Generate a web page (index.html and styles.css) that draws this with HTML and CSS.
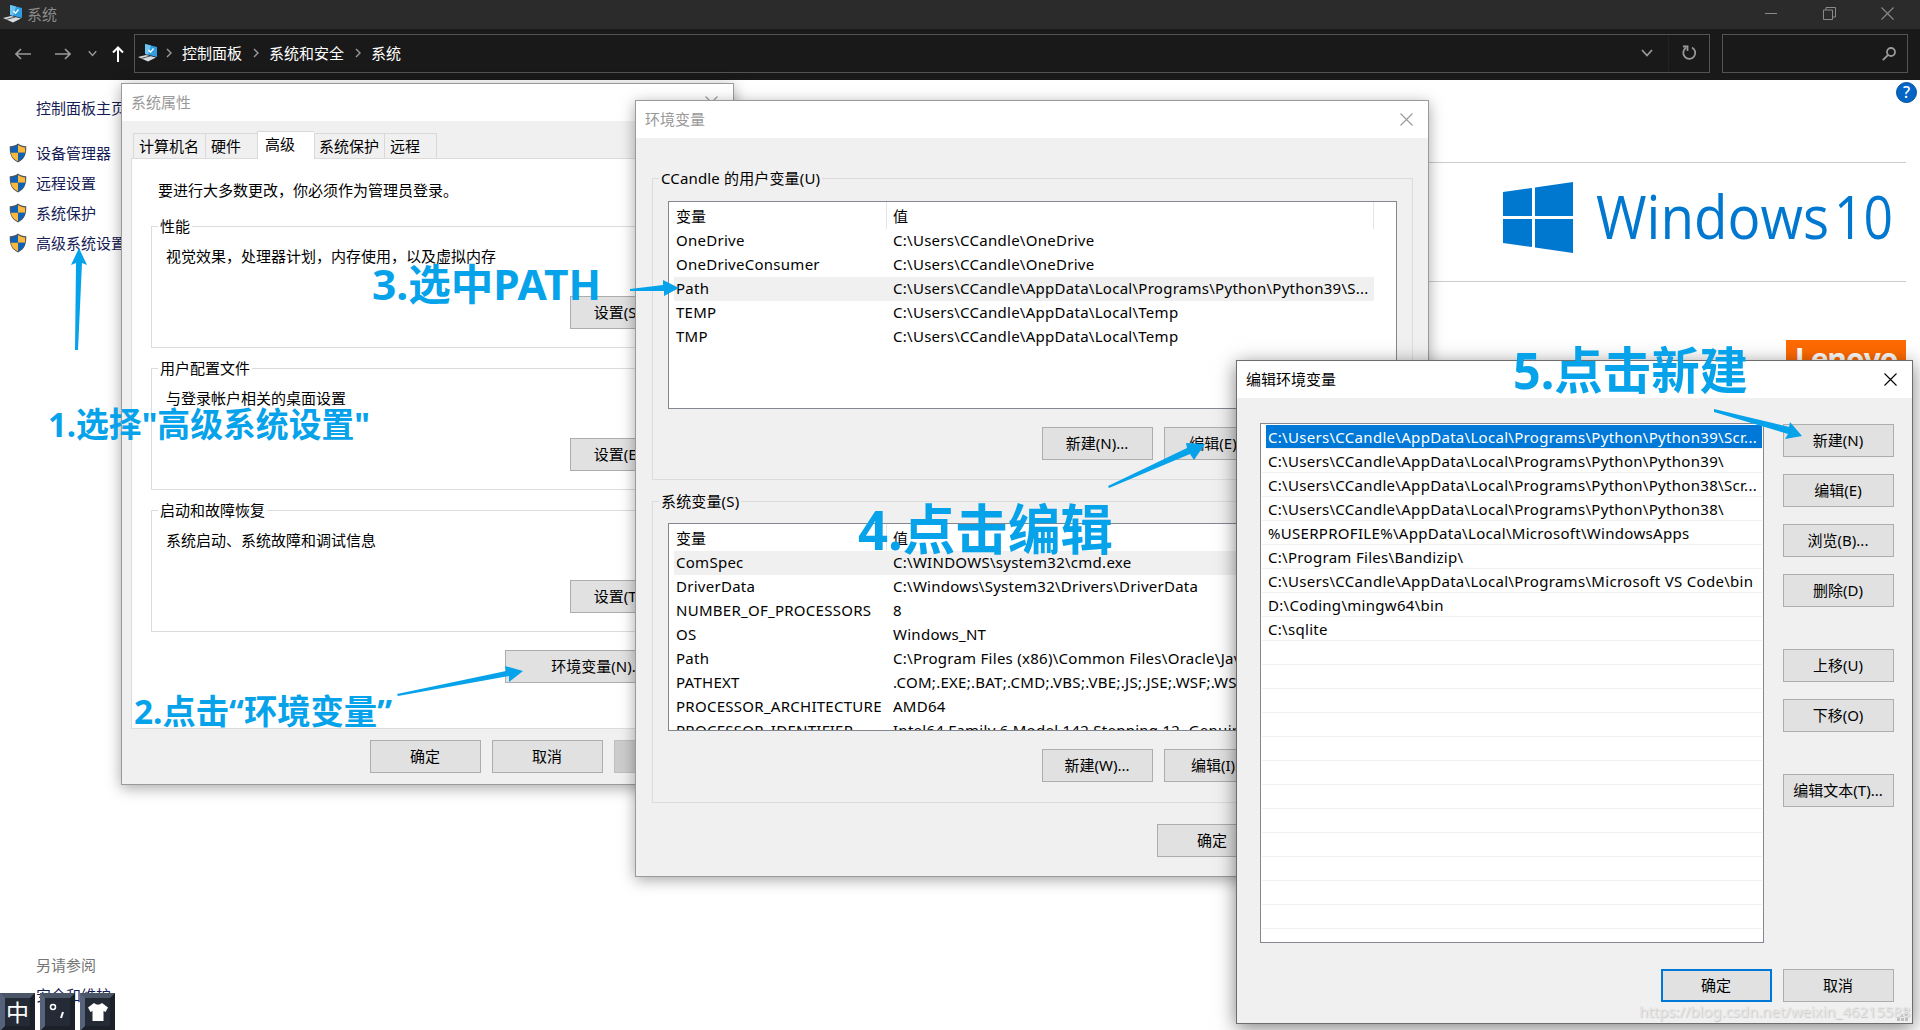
FILE: index.html
```html
<!DOCTYPE html>
<html lang="zh-CN">
<head>
  <meta charset="UTF-8" />
  <meta name="viewport" content="width=device-width, initial-scale=1" />
  <title>系统</title>
  <link rel="stylesheet" href="styles.css">
</head>
<body>

  <!-- Shared icons -->
  <svg class="defs" width="0" height="0">
    <symbol id="pc" viewBox="0 0 20 18">
      <path d="M7 0 L19 3 L19 13 L7 10 Z" fill="#2f9de0"/>
      <path d="M7 0 L13 1.600 L10 10.700 L7 10 Z" fill="#6cc4f2"/>
      <path d="M10.500 6 L12.500 8.300 L15.500 4.500" fill="none" stroke="#fff" stroke-width="1.300"/>
      <path d="M0 13 L8 11 L18 13.500 L10 17.500 Z" fill="#d9dde0"/>
      <path d="M3.500 14.300 L12.500 12" stroke="#333" stroke-width=".8"/>
    </symbol>
    <symbol id="shield" viewBox="0 0 19 21">
      <path d="M9.500 .5 C7 2.500 4 3.200 .8 3.500 C.5 11 2 17 9.500 20.500 C17 17 18.500 11 18.200 3.500 C15 3.200 12 2.500 9.500 .5Z" fill="#4d5560"/>
      <path d="M9.500 2 C7 3.600 4.500 4.400 2 4.600 L2 10.200 L9.500 10.200Z" fill="#0c62b8"/>
      <path d="M9.500 2 C12 3.600 14.500 4.400 17 4.600 L17 10.200 L9.500 10.200Z" fill="#fcb83a"/>
      <path d="M2 10.200 C2.600 14.500 5 17.300 9.500 19.200 L9.500 10.200Z" fill="#fcb83a"/>
      <path d="M17 10.200 C16.400 14.500 14 17.300 9.500 19.200 L9.500 10.200Z" fill="#0c62b8"/>
    </symbol>
    <symbol id="close" viewBox="0 0 13 13">
      <path d="M.5 .5 L12.500 12.500 M12.500 .5 L.5 12.500" fill="none" stroke="currentColor" stroke-width="1.100"/>
    </symbol>
    <symbol id="chev" viewBox="0 0 6 10">
      <path d="M1 1 L5 5 L1 9" fill="none" stroke="currentColor" stroke-width="1.400"/>
    </symbol>
    <symbol id="down" viewBox="0 0 12 8">
      <path d="M1 1 L6 6.500 L11 1" fill="none" stroke="currentColor" stroke-width="1.800"/>
    </symbol>
  </svg>

  <!-- System window -->
  <header class="titlebar">
    <svg class="pc"><use href="#pc"/></svg>
    <span>系统</span>
    <div class="controls">
      <svg width="13" height="13"><path d="M0 6.500 H12" stroke="currentColor"/></svg>
      <svg width="13" height="13"><path d="M.5 3 H9.500 V12.500 H.5Z M3 3 V.5 H12.500 V10 H9.500" fill="none" stroke="currentColor"/></svg>
      <svg width="13" height="13"><use href="#close"/></svg>
    </div>
  </header>
  <nav class="navbar">
    <div class="arrows">
      <svg width="16" height="12" class="left"><path d="M16 6 H1 M6 1 L1 6 L6 11" fill="none" stroke="currentColor" stroke-width="1.700"/></svg>
      <svg width="16" height="12" class="right"><path d="M0 6 H15 M10 1 L15 6 L10 11" fill="none" stroke="currentColor" stroke-width="1.700"/></svg>
      <svg width="9" height="7" class="recent"><use href="#down"/></svg>
      <svg width="12" height="16" class="up"><path d="M6 16 V1.500 M1 6.500 L6 1.500 L11 6.500" fill="none" stroke="currentColor" stroke-width="2"/></svg>
    </div>
    <div class="address">
      <svg class="pc"><use href="#pc"/></svg>
      <svg class="sep"><use href="#chev"/></svg><span>控制面板</span>
      <svg class="sep"><use href="#chev"/></svg><span>系统和安全</span>
      <svg class="sep"><use href="#chev"/></svg><span>系统</span>
      <svg class="drop" width="12" height="8"><use href="#down"/></svg>
      <div class="refresh">
        <svg width="15" height="16"><path d="M10 2.500 A6 6 0 1 1 4 2.800" fill="none" stroke="currentColor" stroke-width="1.800"/><path d="M1 1.500 H5.500 V6" fill="none" stroke="currentColor" stroke-width="1.800"/></svg>
      </div>
    </div>
    <div class="search">
      <svg width="14" height="14"><circle cx="9" cy="5" r="4" fill="none" stroke="currentColor" stroke-width="1.800"/><path d="M6 8 L.8 13.200" stroke="currentColor" stroke-width="1.800"/></svg>
    </div>
  </nav>

  <main class="page">
    <aside class="sidebar">
      <a class="home">控制面板主页</a>
      <a><svg><use href="#shield"/></svg>设备管理器</a>
      <a><svg><use href="#shield"/></svg>远程设置</a>
      <a><svg><use href="#shield"/></svg>系统保护</a>
      <a><svg><use href="#shield"/></svg>高级系统设置</a>
      <div class="see-also">
        <p>另请参阅</p>
        <a>安全和维护</a>
      </div>
    </aside>
    <section class="brand">
      <div class="help">?</div>
      <div class="winlogo">
        <svg width="400" height="90" viewBox="0 0 400 90">
          <path d="M0 11 L29 7 V35 H0Z M32 6.500 L70 1 V35 H32Z M0 38 H29 V66 L0 62Z M32 38 H70 V72 L32 66.500Z" fill="#0078cf"/>
          <text x="93" y="58" textLength="233" lengthAdjust="spacingAndGlyphs">Windows</text>
          <text x="331" y="58" textLength="59" lengthAdjust="spacingAndGlyphs">10</text>
        </svg>
      </div>
      <div class="lenovo">Lenovo</div>
    </section>
  </main>

  <!-- IME bar -->
  <div class="ime">
    <div>中</div>
    <div><svg width="18" height="20"><circle cx="4" cy="5" r="2.500" fill="none" stroke="#fff" stroke-width="1.500"/><path d="M14 10 L12 16" stroke="#fff" stroke-width="2"/></svg></div>
    <div><svg width="20" height="18"><path d="M6 0 Q10 3.500 14 0 L20 4.500 L17.500 9 L15.500 8 V18 H4.500 V8 L2.500 9 L0 4.500Z" fill="#fff"/></svg></div>
  </div>

  <!-- System properties -->
  <div class="window sysprops">
    <div class="caption"><span>系统属性</span><svg><use href="#close"/></svg></div>
    <div class="tabs">
      <div class="t1">计算机名</div>
      <div class="t2">硬件</div>
      <div class="active">高级</div>
      <div class="t4">系统保护</div>
      <div class="t5">远程</div>
    </div>
    <div class="panel">
      <p>要进行大多数更改，你必须作为管理员登录。</p>
      <fieldset>
        <legend>性能</legend>
        <p>视觉效果，处理器计划，内存使用，以及虚拟内存</p>
        <button>设置(S)...</button>
      </fieldset>
      <fieldset>
        <legend>用户配置文件</legend>
        <p>与登录帐户相关的桌面设置</p>
        <button>设置(E)...</button>
      </fieldset>
      <fieldset>
        <legend>启动和故障恢复</legend>
        <p>系统启动、系统故障和调试信息</p>
        <button>设置(T)...</button>
      </fieldset>
      <button class="envbtn">环境变量(N)...</button>
    </div>
    <div class="footer">
      <button>确定</button>
      <button>取消</button>
      <button class="disabled">应用(A)</button>
    </div>
  </div>

  <!-- Environment variables -->
  <div class="window envvars">
    <div class="caption"><span>环境变量</span><svg><use href="#close"/></svg></div>
    <fieldset class="user">
      <legend>CCandle 的用户变量(U)</legend>
      <div class="list">
        <div class="row head"><span>变量</span><span>值</span></div>
        <div class="row"><span>OneDrive</span><span>C:\Users\CCandle\OneDrive</span></div>
        <div class="row"><span>OneDriveConsumer</span><span>C:\Users\CCandle\OneDrive</span></div>
        <div class="row sel"><span>Path</span><span>C:\Users\CCandle\AppData\Local\Programs\Python\Python39\S...</span></div>
        <div class="row"><span>TEMP</span><span>C:\Users\CCandle\AppData\Local\Temp</span></div>
        <div class="row"><span>TMP</span><span>C:\Users\CCandle\AppData\Local\Temp</span></div>
      </div>
      <div class="btns">
        <button>新建(N)...</button>
        <button>编辑(E)...</button>
        <button>删除(D)</button>
      </div>
    </fieldset>
    <fieldset class="system">
      <legend>系统变量(S)</legend>
      <div class="list">
        <div class="row head"><span>变量</span><span>值</span></div>
        <div class="row sel"><span>ComSpec</span><span>C:\WINDOWS\system32\cmd.exe</span></div>
        <div class="row"><span>DriverData</span><span>C:\Windows\System32\Drivers\DriverData</span></div>
        <div class="row"><span>NUMBER_OF_PROCESSORS</span><span>8</span></div>
        <div class="row"><span>OS</span><span>Windows_NT</span></div>
        <div class="row"><span>Path</span><span>C:\Program Files (x86)\Common Files\Oracle\Java\javapath;</span></div>
        <div class="row"><span>PATHEXT</span><span>.COM;.EXE;.BAT;.CMD;.VBS;.VBE;.JS;.JSE;.WSF;.WSH;.MSC</span></div>
        <div class="row"><span>PROCESSOR_ARCHITECTURE</span><span>AMD64</span></div>
        <div class="row"><span>PROCESSOR_IDENTIFIER</span><span>Intel64 Family 6 Model 142 Stepping 12, GenuineIntel</span></div>
      </div>
      <div class="btns">
        <button>新建(W)...</button>
        <button>编辑(I)...</button>
        <button>删除(L)</button>
      </div>
    </fieldset>
    <div class="footer">
      <button>确定</button>
      <button>取消</button>
    </div>
  </div>

  <!-- Edit environment variable -->
  <div class="window editor">
    <div class="caption"><span>编辑环境变量</span><svg><use href="#close"/></svg></div>
    <div class="content">
      <div class="paths">
        <div class="sel">C:\Users\CCandle\AppData\Local\Programs\Python\Python39\Scr...</div>
        <div>C:\Users\CCandle\AppData\Local\Programs\Python\Python39\</div>
        <div>C:\Users\CCandle\AppData\Local\Programs\Python\Python38\Scr...</div>
        <div>C:\Users\CCandle\AppData\Local\Programs\Python\Python38\</div>
        <div>%USERPROFILE%\AppData\Local\Microsoft\WindowsApps</div>
        <div>C:\Program Files\Bandizip\</div>
        <div>C:\Users\CCandle\AppData\Local\Programs\Microsoft VS Code\bin</div>
        <div>D:\Coding\mingw64\bin</div>
        <div>C:\sqlite</div>
        <div></div><div></div><div></div><div></div><div></div><div></div>
        <div></div><div></div><div></div><div></div><div></div><div></div>
      </div>
      <div class="side">
        <button>新建(N)</button>
        <button>编辑(E)</button>
        <button>浏览(B)...</button>
        <button>删除(D)</button>
        <button class="gap">上移(U)</button>
        <button>下移(O)</button>
        <button class="gap">编辑文本(T)...</button>
      </div>
    </div>
    <div class="footer">
      <button class="default">确定</button>
      <button>取消</button>
    </div>
    <svg class="grip" width="11" height="11"><path d="M8 0h3v3h-3z M4 4h3v3h-3z M8 4h3v3h-3z M0 8h3v3h-3z M4 8h3v3h-3z M8 8h3v3h-3z" fill="#bfbfbf"/></svg>
  </div>

  <!-- Tutorial notes -->
  <svg class="notes" width="1920" height="1030" viewBox="0 0 1920 1030">
    <polygon points="79,248 87,265 82,263 78,350 75,350 76,263 71,265"/>
    <polygon points="523,671 509,682 509,676 398,696 397,694 506,671 505,666"/>
    <polygon points="679,288 664,296 664,291 630,291 630,289 663,285 663,280"/>
    <polygon points="1205,444 1194,460 1190,454 1109,488 1108,486 1187,448 1186,443"/>
    <polygon points="1802,436 1785,439 1788,434 1714,412 1714,409 1789,427 1790,422"/>
    <text class="n1" x="48" y="437" textLength="322" lengthAdjust="spacingAndGlyphs">1.选择"高级系统设置"</text>
    <text class="n1" x="134" y="724" textLength="258" lengthAdjust="spacingAndGlyphs">2.点击“环境变量”</text>
    <text class="n3" x="372" y="300" textLength="229" lengthAdjust="spacingAndGlyphs">3.选中PATH</text>
    <text class="n4" x="858" y="550" textLength="255" lengthAdjust="spacingAndGlyphs">4.点击编辑</text>
    <text class="n5" x="1513" y="389" textLength="235" lengthAdjust="spacingAndGlyphs">5.点击新建</text>
  </svg>
  <div class="watermark">https://blog.csdn.net/weixin_46215588</div>

</body>
</html>
```
FILE: styles.css
```css
* {
  box-sizing: border-box;
}
body {
  margin: 0;
  width: 1920px;
  height: 1030px;
  overflow: hidden;
  position: relative;
  background: #fff;
  color: #000;
  font-family: 'Noto Sans', 'Noto Sans CJK SC', sans-serif;
  font-size: 15px;
  line-height: 20px;
}
p {
  margin: 0;
}
svg {
  display: block;
  flex: none;
}
.defs {
  position: absolute;
}
.titlebar {
  height: 29px;
  background: #2b2b2b;
  color: #8a8a8a;
  display: flex;
  align-items: center;
  padding: 0 26px 2px 3px;
  gap: 4px;
}
.pc {
  width: 20px;
  height: 18px;
}
.controls {
  margin-left: auto;
  display: flex;
  gap: 45px;
}
.navbar {
  height: 51px;
  background: #191919;
  color: #999;
  display: flex;
  padding: 5px 12px 7px 0;
}
.arrows {
  width: 134px;
  display: flex;
  align-items: center;
  padding-left: 15px;
}
.right {
  margin-left: 24px;
}
.recent {
  margin-left: 17px;
}
.up {
  margin-left: 15px;
  color: #fff;
}
.address {
  width: 1576px;
  border: 1px solid #535353;
  display: flex;
  align-items: center;
  color: #fff;
  padding: 0 0 1px 3px;
}
.address .sep {
  width: 6px;
  height: 10px;
  margin: 0 10px 0 11px;
  color: #999;
}
.address .pc + .sep {
  margin-left: 8px;
}
.address .drop {
  margin-left: auto;
  margin-right: 15px;
  color: #999;
}
.refresh {
  width: 41px;
  height: 100%;
  border-left: 1px solid #222;
  display: flex;
  align-items: center;
  justify-content: center;
  color: #999;
}
.search {
  width: 186px;
  margin-left: 12px;
  border: 1px solid #535353;
  display: flex;
  align-items: center;
  justify-content: flex-end;
  padding-right: 11px;
}
.page {
  height: 950px;
  display: flex;
  justify-content: space-between;
}
.sidebar {
  width: 160px;
  height: 950px;
  padding: 13px 0 0 9px;
  display: flex;
  flex-direction: column;
}
.sidebar a {
  height: 30px;
  display: flex;
  align-items: center;
  gap: 9px;
  color: #161c55;
  white-space: nowrap;
}
.sidebar a svg {
  width: 18px;
  height: 20px;
}
.sidebar .home {
  padding-left: 27px;
  margin-bottom: 15px;
}
.see-also {
  margin-top: 697px;
  padding-left: 27px;
  color: #767676;
}
.see-also a {
  margin-top: 5px;
}
.brand {
  width: 520px;
}
.help {
  width: 21px;
  height: 21px;
  margin: 2px 3px 0 auto;
  border-radius: 50%;
  background: #0565c4;
  border: 1px solid #034f9c;
  color: #fff;
  font-size: 16px;
  font-weight: 500;
  line-height: 19px;
  text-align: center;
}
.winlogo {
  margin: 59px 14px 0 0;
  height: 120px;
  border-top: 1px solid #ccc;
  border-bottom: 1px solid #ccc;
  padding: 18px 0 0 103px;
}
.winlogo text {
  font-family: 'Open Sans', 'Noto Sans', sans-serif;
  font-weight: 400;
  font-size: 60px;
  fill: #0078cf;
}
.lenovo {
  width: 120px;
  height: 40px;
  margin: 58px 14px 0 auto;
  background: #ff6a00;
  color: #fff;
  font-family: 'Open Sans', sans-serif;
  font-weight: 700;
  font-size: 30px;
  letter-spacing: -1px;
  line-height: 37px;
  text-align: center;
}
.ime {
  position: absolute;
  left: 0;
  top: 993px;
  display: flex;
  gap: 5px;
}
.ime div {
  width: 35px;
  height: 38px;
  background: #252b36;
  border: 5px solid #1b2029;
  border-top-color: #4a5568;
  border-left-color: #56627a;
  color: #fff;
  font-size: 23px;
  display: flex;
  align-items: center;
  justify-content: center;
}
.window {
  position: absolute;
  background: #f0f0f0;
  border: 1px solid #9a9a9a;
  box-shadow: 0 3px 14px rgba(0, 0, 0, 0.35);
  overflow: hidden;
}
.caption {
  height: 37px;
  background: #fff;
  color: #999;
  display: flex;
  align-items: center;
  justify-content: space-between;
  padding: 0 15px 1px 9px;
}
.caption svg {
  width: 13px;
  height: 13px;
}
button {
  width: 111px;
  height: 33px;
  flex: none;
  padding: 0 1px 2px 0;
  border: 1px solid #adadad;
  background: #e1e1e1;
  color: #000;
  font: inherit;
  white-space: nowrap;
}
fieldset {
  margin: 0;
  border: 1px solid #dcdcdc;
  min-width: 0;
}
legend {
  padding: 0 2px;
  line-height: 20px;
}
.sysprops {
  left: 121px;
  top: 83px;
  width: 613px;
  height: 702px;
}
.tabs {
  height: 37px;
  padding: 11px 0 0 11px;
  display: flex;
  align-items: flex-end;
}
.tabs div {
  height: 25px;
  border: 1px solid #d9d9d9;
  border-bottom: none;
  border-right: none;
  padding: 2px 0 0 5px;
}
.t1 {
  width: 72px;
}
.t2 {
  width: 52px;
}
.tabs .active {
  width: 57px;
  height: 28px;
  background: #fff;
  margin-bottom: -1px;
  padding-left: 7px;
}
.tabs .t4 {
  width: 70px;
  padding-left: 4px;
}
.tabs .t5 {
  width: 53px;
  border-right: 1px solid #d9d9d9;
}
.panel {
  margin: 0 9px;
  height: 571px;
  border: 1px solid #dcdcdc;
  background: #fff;
  padding: 21px 19px 0;
}
.panel > p {
  padding-left: 7px;
}
.panel fieldset {
  height: 132px;
  margin-bottom: 10px;
  padding: 10px 10px 0 14px;
}
.panel legend {
  margin-left: -8px;
}
.panel > p + fieldset {
  margin-top: 16px;
}
.panel fieldset button {
  display: block;
  margin: 30px 0 0 404px;
  padding-right: 4px;
}
.panel .envbtn {
  display: block;
  width: 176px;
  margin: 18px 0 0 354px;
  padding-left: 10px;
}
.sysprops .footer {
  display: flex;
  gap: 11px;
  margin: 11px 0 0 248px;
}
.sysprops .disabled {
  background: #ccc;
  border-color: #bfbfbf;
  color: #838383;
}
.envvars {
  left: 635px;
  top: 100px;
  width: 794px;
  height: 777px;
}
.envvars fieldset {
  margin: 0 15px 0 16px;
  padding: 13px 15px 0;
}
.envvars legend {
  margin-left: -9px;
  letter-spacing: 0.15px;
}
.envvars .user {
  margin-top: 30px;
  height: 312px;
}
.envvars .system {
  margin-top: 11px;
  height: 312px;
}
.system .list {
  margin-top: -1px;
}
.list {
  height: 208px;
  border: 1px solid #828790;
  background: #fff;
  overflow: hidden;
}
.row {
  height: 24px;
  margin: 0 22px 0 5px;
  display: grid;
  grid-template-columns: 213px 1fr;
  line-height: 23px;
  letter-spacing: 0.27px;
  white-space: nowrap;
  overflow: hidden;
}
.row span {
  padding-left: 2px;
}
.row span + span {
  padding-left: 6px;
}
.row.head {
  height: 27px;
  line-height: 29px;
  letter-spacing: 0;
  border-right: 1px solid #e5e5e5;
}
.row.head span:first-child {
  border-right: 1px solid #e5e5e5;
}
.row.sel {
  background: #f0f0f0;
}
.btns {
  display: flex;
  justify-content: flex-end;
  gap: 11px;
  margin-top: 18px;
}
.envvars .footer {
  display: flex;
  gap: 11px;
  margin: 21px 0 0 521px;
}
.editor {
  left: 1236px;
  top: 360px;
  width: 677px;
  height: 664px;
  border-color: #6d6d6d;
  box-shadow: 0 4px 18px rgba(0, 0, 0, 0.5);
}
.editor .caption {
  color: #000;
}
.content {
  display: flex;
  gap: 19px;
  padding: 25px 0 0 23px;
}
.paths {
  width: 504px;
  height: 520px;
  border: 1px solid #828790;
  background: #fff;
  overflow: hidden;
  padding: 1px;
}
.paths div {
  height: 24px;
  border-bottom: 1px solid #f0f0f0;
  padding-left: 6px;
  line-height: 25px;
  letter-spacing: 0.3px;
  white-space: nowrap;
}
.paths .sel {
  margin-left: 4px;
  padding-left: 2px;
  background: #0078d7;
  color: #fff;
}
.side {
  display: flex;
  flex-direction: column;
  gap: 17px;
  padding-top: 1px;
}
.side .gap {
  margin-top: 25px;
}
.editor .footer {
  display: flex;
  gap: 11px;
  margin: 26px 0 0 424px;
}
.editor .default {
  border: 2px solid #0078d7;
}
.grip {
  position: absolute;
  right: 4px;
  bottom: 2px;
}
.notes {
  position: absolute;
  left: 0;
  top: 0;
  fill: #06a2ea;
  font-weight: 700;
}
.n1 {
  font-size: 34px;
}
.n3 {
  font-size: 42px;
}
.n4 {
  font-size: 54px;
}
.n5 {
  font-size: 50px;
}
.watermark {
  position: absolute;
  left: 1639px;
  top: 1001px;
  color: #e6e6e6;
  text-shadow: 1px 1px 1px #c8c8c8;
  letter-spacing: -0.05px;
  white-space: nowrap;
}
```
